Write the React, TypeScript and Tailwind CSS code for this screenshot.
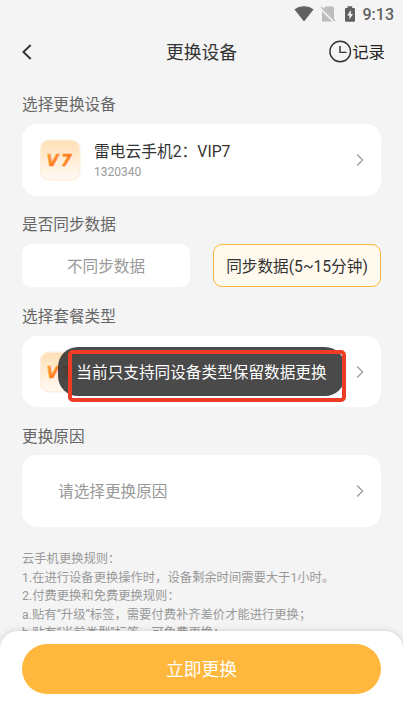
import type { ReactNode } from "react"

const rules = [
  "云手机更换规则：",
  "1.在进行设备更换操作时，设备剩余时间需要大于1小时。",
  "2.付费更换和免费更换规则：",
  "a.贴有“升级”标签，需要付费补齐差价才能进行更换；",
  "b.贴有“当前类型”标签，可免费更换；",
]

const Chevron = () => (
  <svg className="ml-auto shrink-0" width="8" height="14" viewBox="0 0 8 14" fill="none">
    <path d="M1.2 1.5L6.6 7L1.2 12.5" stroke="#999" strokeWidth="1.2" />
  </svg>
)

const DeviceIcon = () => (
  <svg className="shrink-0" width="42" height="42" viewBox="0 0 42 42">
    <defs>
      <linearGradient id="tile" x1="0" y1="0" x2="0" y2="1">
        <stop offset="0" stopColor="#ffdfb4" />
        <stop offset="1" stopColor="#fffaf4" />
      </linearGradient>
      <linearGradient id="mark" x1="0" y1="0" x2="1" y2="1">
        <stop offset="0" stopColor="#ffa64a" />
        <stop offset="0.5" stopColor="#ff7d1c" />
        <stop offset="1" stopColor="#ffa34c" />
      </linearGradient>
    </defs>
    <rect x="1.5" y="1.2" width="39.4" height="39.6" rx="8.5" fill="url(#tile)" stroke="#ffeedb" strokeWidth="1.4" />
    <text
      x="7.6"
      y="26.8"
      fill="url(#mark)"
      stroke="url(#mark)"
      strokeWidth="0.5"
      fontFamily="DejaVu Sans, sans-serif"
      fontSize="15.5"
      fontWeight="700"
      fontStyle="italic"
      letterSpacing="2.5"
    >
      V7
    </text>
  </svg>
)

const Label = ({ children }: { children: ReactNode }) => (
  <h2 className="text-[15.65px] leading-5 text-[#666]">{children}</h2>
)

const StatusBar = () => (
  <div className="flex h-7 items-center justify-end pr-[9px] text-[#616161]">
    <svg width="20" height="16" viewBox="0 0 20 16">
      <path d="M0.5 3.6C6 -0.8 14 -0.8 19.5 3.6L10 15.5Z" fill="currentColor" />
    </svg>
    <svg className="ml-1.5" width="16" height="16" viewBox="0 0 16 16">
      <path d="M5.5 0.5H12.5Q14 0.5 14 2V15.5H2V4Z" fill="#bdbdbd" />
      <path d="M0 1.5L14.5 16" stroke="#f4f4f4" strokeWidth="2.6" />
      <path d="M1 1L15 15" stroke="#bdbdbd" strokeWidth="1.3" />
    </svg>
    <svg className="ml-2" width="12" height="16" viewBox="0 0 12 16">
      <path d="M3.6 0.2H8.2V1.9H10Q11 1.9 11 2.9V14.8Q11 15.8 10 15.8H2Q1 15.8 1 14.8V2.9Q1 1.9 2 1.9H3.6Z" fill="currentColor" />
      <path d="M7 4L3.2 9.4H5.4V13.4L9 8H6.8Z" fill="#f4f4f4" />
    </svg>
    <span className="ml-[7px] pt-px text-[16px] leading-none font-medium">9:13</span>
  </div>
)

const App = () => {
  return (
    <div className="relative flex h-screen w-full flex-col overflow-hidden bg-[#f4f4f4] font-['Roboto','Noto_Sans_CJK_SC',sans-serif] whitespace-nowrap text-[#333]">
      <StatusBar />

      <header className="grid h-12 grid-cols-3 items-center pr-[18px] pl-[22px]">
        <svg width="10" height="16" viewBox="0 0 10 16" fill="none">
          <path d="M8.7 1L1.4 8L8.7 15" stroke="#333" strokeWidth="1.9" />
        </svg>
        <h1 className="-ml-[4px] pt-0.5 text-center text-[17.8px]">更换设备</h1>
        <div className="flex items-center justify-end text-[16.4px] text-[#222]">
          <svg width="23" height="23" viewBox="0 0 23 23" fill="none" stroke="#333" strokeWidth="1.4">
            <circle cx="11.2" cy="11.5" r="10.3" />
            <path d="M11 6V12.4H17.5" />
          </svg>
          <span className="pt-0.5">记录</span>
        </div>
      </header>

      <main className="flex flex-col px-[22px] pt-[19px]">
        <Label>选择更换设备</Label>
        <div className="mt-[9px] flex h-[72px] w-[359px] items-center rounded-[15px] bg-white pr-[17px] pl-[17px]">
          <DeviceIcon />
          <div className="ml-[13px] pt-[3px]">
            <p className="text-[15.75px] leading-5">雷电云手机2：VIP7</p>
            <p className="mt-px text-[12px] leading-[18px] text-[#999]">1320340</p>
          </div>
          <Chevron />
        </div>

        <div className="mt-[19px]">
          <Label>是否同步数据</Label>
        </div>
        <div className="mt-[9px] flex w-[359px] justify-between text-[15.65px]">
          <button className="h-[43px] w-[168px] rounded-[9px] bg-white pt-0.5 text-[#999]">不同步数据</button>
          <button className="h-[43px] w-[168px] rounded-[9px] border border-[#ffb73d] bg-[#fff9ee] pt-0.5">
            同步数据(5~15分钟)
          </button>
        </div>

        <div className="mt-[20px]">
          <Label>选择套餐类型</Label>
        </div>
        <div className="relative mt-[9px] flex h-[71px] w-[359px] items-center rounded-[15px] bg-white px-[17px]">
          <DeviceIcon />
          <p className="ml-[13px] text-[13.5px]">VIP7</p>
          <Chevron />

          {/* Toast */}
          <div className="absolute top-[11px] left-[36px] flex h-[49px] w-[287px] items-center justify-center rounded-[20px] bg-[#363636]/90 pt-0.5 text-[15.65px] text-white">
            当前只支持同设备类型保留数据更换
          </div>
          <div className="absolute top-[14px] left-[46px] h-[52px] w-[278px] rounded-[5px] border-4 border-[#ee3d25]" />
        </div>

        <div className="mt-[20px]">
          <Label>更换原因</Label>
        </div>
        <div className="mt-[8px] flex h-[72px] w-[359px] items-center rounded-[15px] bg-white pr-[17px] pl-9">
          <p className="pt-0.5 text-[15.65px] text-[#999]">请选择更换原因</p>
          <Chevron />
        </div>

        <div className="mt-[23px] text-[12.3px] leading-[18.5px] text-[#999]">
          {rules.map((rule) => (
            <p key={rule}>{rule}</p>
          ))}
        </div>
      </main>

      {/* Bottom action */}
      <footer className="absolute inset-x-0 bottom-0 h-[85px] rounded-t-[18px] bg-white px-[22px] pt-[13px] shadow-[0_0_6px_rgba(0,0,0,0.16)]">
        <button className="h-[50px] w-[359px] rounded-full bg-[#ffb73d] pt-0.5 text-[17.8px] text-white">立即更换</button>
      </footer>
    </div>
  )
}

export default App
